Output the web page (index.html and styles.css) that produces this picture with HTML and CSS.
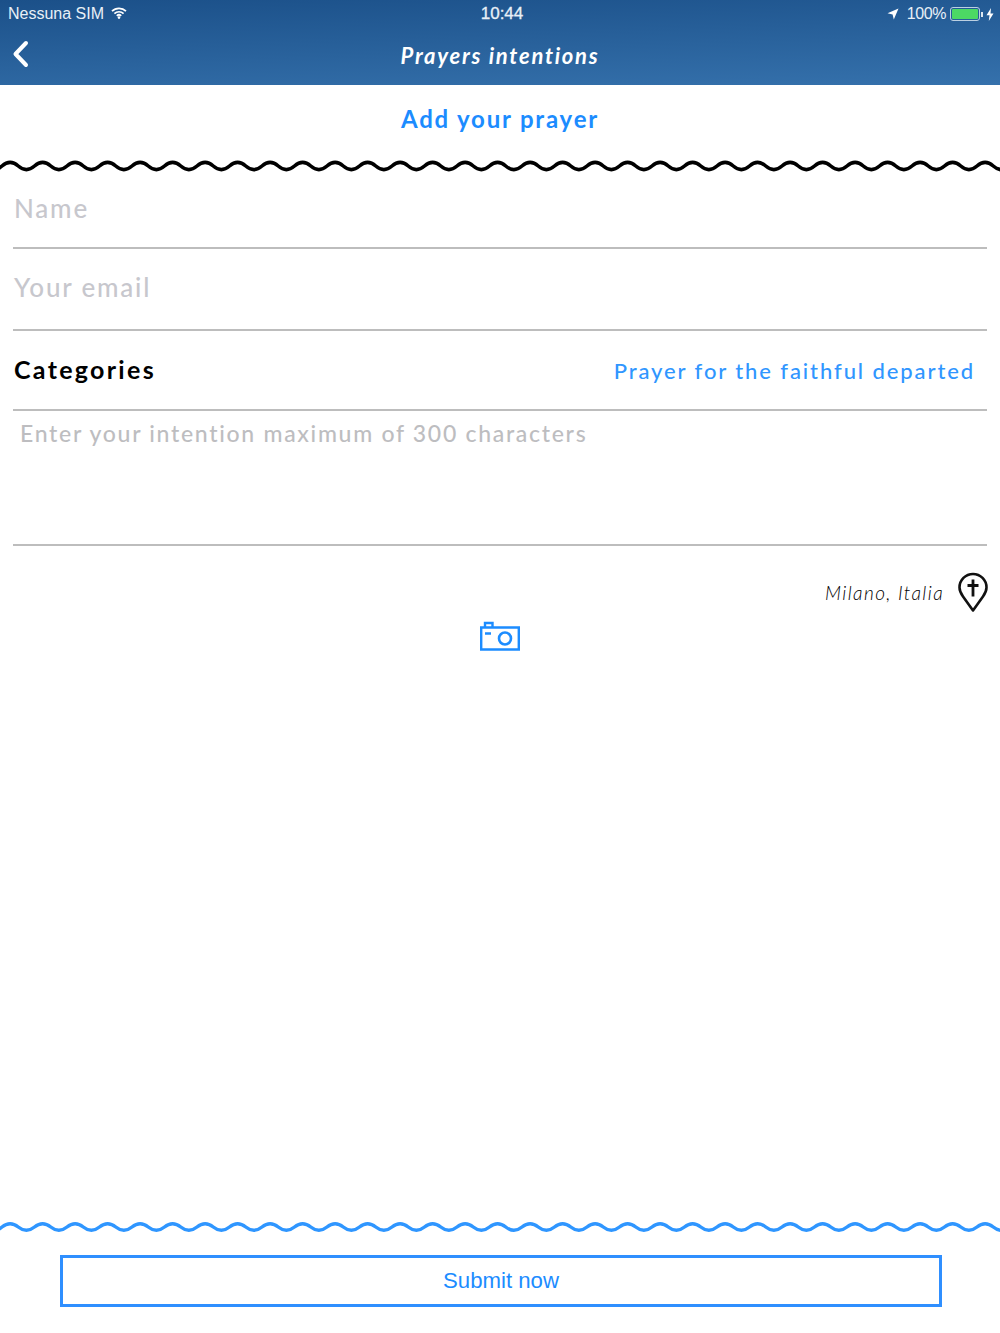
FILE: index.html
```html
<!DOCTYPE html>
<html lang="en">
<head>
<meta charset="utf-8">
<title>Prayers intentions</title>
<link rel="stylesheet" href="styles.css">
</head>
<body>
<div class="page">
  <header class="header">
    <div class="status">
      <div class="status-side">
        <span>Nessuna SIM</span>
        <svg class="wifi" width="16" height="12" viewBox="0 0 16 12"><path d="M1 4.2a10 10 0 0 1 14 0M3.4 6.6a6.6 6.6 0 0 1 9.2 0M5.8 8.8a3.2 3.2 0 0 1 4.4 0" fill="none" stroke="#fff" stroke-width="1.7"/><circle cx="8" cy="10.6" r="1.3" fill="#fff"/></svg>
      </div>
      <div class="clock">10:44</div>
      <div class="status-side status-right">
        <svg width="12" height="12" viewBox="0 0 12 12"><path d="M11.5 .5 6.8 11.5 5.6 6.4 .5 5.2z" fill="#fff"/></svg>
        <span class="pct">100%</span>
        <span class="battery"><span class="battery-fill"></span></span>
        <span class="battery-tip"></span>
        <svg width="8" height="13" viewBox="0 0 8 13"><path d="M5 0 .5 7.2h3L2.800 13 7.500 5.400h-3z" fill="#fff"/></svg>
      </div>
    </div>
    <nav class="nav">
      <svg class="back" width="18" height="28" viewBox="0 0 18 28"><path d="M15 3 4.500 14 15 25" fill="none" stroke="#fff" stroke-width="4" stroke-linecap="round" stroke-linejoin="round"/></svg>
      <h1 class="nav-title">Prayers intentions</h1>
    </nav>
  </header>

  <h2 class="add-title">Add your prayer</h2>
  <svg class="wave wave-top" width="1000" height="14" viewBox="0 0 1000 14"><path d="M-30.500 7q8.125 -7.200 16.250 0t16.250 0t16.250 0t16.250 0t16.250 0t16.250 0t16.250 0t16.250 0t16.250 0t16.250 0t16.250 0t16.250 0t16.250 0t16.250 0t16.250 0t16.250 0t16.250 0t16.250 0t16.250 0t16.250 0t16.250 0t16.250 0t16.250 0t16.250 0t16.250 0t16.250 0t16.250 0t16.250 0t16.250 0t16.250 0t16.250 0t16.250 0t16.250 0t16.250 0t16.250 0t16.250 0t16.250 0t16.250 0t16.250 0t16.250 0t16.250 0t16.250 0t16.250 0t16.250 0t16.250 0t16.250 0t16.250 0t16.250 0t16.250 0t16.250 0t16.250 0t16.250 0t16.250 0t16.250 0t16.250 0t16.250 0t16.250 0t16.250 0t16.250 0t16.250 0t16.250 0t16.250 0t16.250 0t16.250 0" fill="none" stroke="#000" stroke-width="3.600"/></svg>

  <form class="form">
    <div class="field field-name"><span class="placeholder">Name</span></div>
    <div class="field field-email"><span class="placeholder">Your email</span></div>
    <div class="field field-cat">
      <span class="cat-label">Categories</span>
      <span class="cat-value">Prayer for the faithful departed</span>
    </div>
    <div class="field field-text"><span class="placeholder placeholder-small">Enter your intention maximum of 300 characters</span></div>
  </form>

  <div class="location">
    <span class="location-text">Milano, Italia</span>
    <svg width="30" height="40" viewBox="0 0 30 40"><path d="M15 38.500 5 24.500C2.500 21 1.500 18.500 1.500 15.500a13.500 13.500 0 0 1 27 0c0 3-1 5.500-3.500 9z" fill="none" stroke="#111" stroke-width="2.600" stroke-linejoin="round"/><path d="M15 7.500v17M9.500 13.500h11" fill="none" stroke="#111" stroke-width="2.800"/></svg>
  </div>

  <div class="camera-row">
    <svg width="40" height="30" viewBox="0 0 40 30"><path d="M1.200 6.500h37.600v22H1.200zM5 6.500V2h7.500v4.500M5 12.500h6" fill="none" stroke="#1c8cff" stroke-width="2.400"/><circle cx="25" cy="17.500" r="6" fill="none" stroke="#1c8cff" stroke-width="2.600"/></svg>
  </div>

  <div class="spacer"></div>

  <svg class="wave wave-bottom" width="1000" height="14" viewBox="0 0 1000 14"><path d="M-30.500 7q8.125 -6.600 16.250 0t16.250 0t16.250 0t16.250 0t16.250 0t16.250 0t16.250 0t16.250 0t16.250 0t16.250 0t16.250 0t16.250 0t16.250 0t16.250 0t16.250 0t16.250 0t16.250 0t16.250 0t16.250 0t16.250 0t16.250 0t16.250 0t16.250 0t16.250 0t16.250 0t16.250 0t16.250 0t16.250 0t16.250 0t16.250 0t16.250 0t16.250 0t16.250 0t16.250 0t16.250 0t16.250 0t16.250 0t16.250 0t16.250 0t16.250 0t16.250 0t16.250 0t16.250 0t16.250 0t16.250 0t16.250 0t16.250 0t16.250 0t16.250 0t16.250 0t16.250 0t16.250 0t16.250 0t16.250 0t16.250 0t16.250 0t16.250 0t16.250 0t16.250 0t16.250 0t16.250 0t16.250 0t16.250 0t16.250 0" fill="none" stroke="#2f96ff" stroke-width="3.400"/></svg>

  <div class="submit-row">
    <button class="submit" type="button">Submit now</button>
  </div>
</div>
</body>
</html>
```
FILE: styles.css
```css
* { box-sizing: border-box; }
html, body { margin: 0; padding: 0; background: #fff; }
.page {
  width: 1000px;
  height: 1333px;
  display: flex;
  flex-direction: column;
  overflow: hidden;
  font-family: "Lato", "Liberation Sans", sans-serif;
}
.header {
  height: 85px;
  flex: none;
  color: #fff;
  background: linear-gradient(178deg, #1b5089 0%, #3571ac 100%);
}
.status {
  height: 28px;
  padding: 0 8px;
  display: grid;
  grid-template-columns: 1fr auto 1fr;
  align-items: center;
  font-family: "Liberation Sans", Arial, sans-serif;
  font-size: 16px;
  color: #e9f0f7;
}
.status-side { display: flex; align-items: center; gap: 7px; }
.wifi { margin-top: -3px; }
.clock { font-size: 17px; padding-left: 4px; -webkit-text-stroke: 0.3px #e9f0f7; }
.status-right { justify-content: flex-end; gap: 0; margin-right: -2px; }
.pct { margin: 0 4px 0 8px; letter-spacing: -0.4px; }
.battery {
  width: 30px;
  height: 14px;
  border: 1px solid #bcd0e2;
  border-radius: 3px;
  padding: 1px;
  display: flex;
}
.battery-fill { flex: 1; background: #4cd964; border-radius: 1px; }
.battery-tip { width: 2px; height: 5px; background: #dfe8f0; margin: 0 3px 0 1px; }
.nav {
  height: 57px;
  display: flex;
  align-items: center;
  justify-content: center;
  position: relative;
}
.back { position: absolute; left: 11px; top: 12px; }
.nav-title {
  margin: 0 0 3px;
  font-size: 22px;
  font-weight: 700;
  font-style: italic;
  letter-spacing: 1.75px;
}
.add-title {
  margin: 0;
  height: 66px;
  flex: none;
  display: flex;
  align-items: center;
  justify-content: center;
  font-size: 24px;
  font-weight: 700;
  letter-spacing: 1.8px;
  color: #1c8cff;
}
.wave { display: block; flex: none; }
.wave-top { margin-top: 8px; }
.form { flex: none; padding: 0 13px; }
.field { border-bottom: 2px solid #bdbdbd; display: flex; align-items: center; padding: 0 1px; }
.field-name { height: 76px; padding-bottom: 4px; }
.field-email { height: 82px; padding-bottom: 5px; }
.field-cat { height: 80px; justify-content: space-between; padding-right: 12px; padding-bottom: 2px; }
.field-text { height: 135px; align-items: flex-start; padding: 8px 7px 0; }
.placeholder { font-size: 26px; color: #c7c7cd; letter-spacing: 1.8px; font-weight: 500; }
.placeholder-small { font-size: 23px; color: #bdbdc0; letter-spacing: 1.7px; }
.cat-label { font-size: 25px; font-weight: 700; letter-spacing: 2.3px; color: #000; }
.cat-value { font-size: 22px; font-weight: 500; letter-spacing: 1.9px; color: #3096ff; padding-top: 3px; }
.location {
  flex: none;
  margin-top: 26px;
  padding-right: 12px;
  display: flex;
  justify-content: flex-end;
  align-items: center;
  gap: 14px;
}
.location-text { font-size: 19px; font-style: italic; font-weight: 300; letter-spacing: 1.4px; color: #000; }
.camera-row { flex: none; display: flex; justify-content: center; margin-top: 9px; }
.spacer { flex: 1; }
.wave-bottom { margin-bottom: 21px; }
.submit-row { flex: none; padding: 0 58px 26px 60px; }
.submit {
  display: block;
  width: 100%;
  height: 52px;
  background: #fff;
  border: 3px solid #2f8fff;
  border-radius: 0;
  font-family: "Liberation Sans", Arial, sans-serif;
  font-size: 22.2px;
  color: #1c8cff;
}
```
